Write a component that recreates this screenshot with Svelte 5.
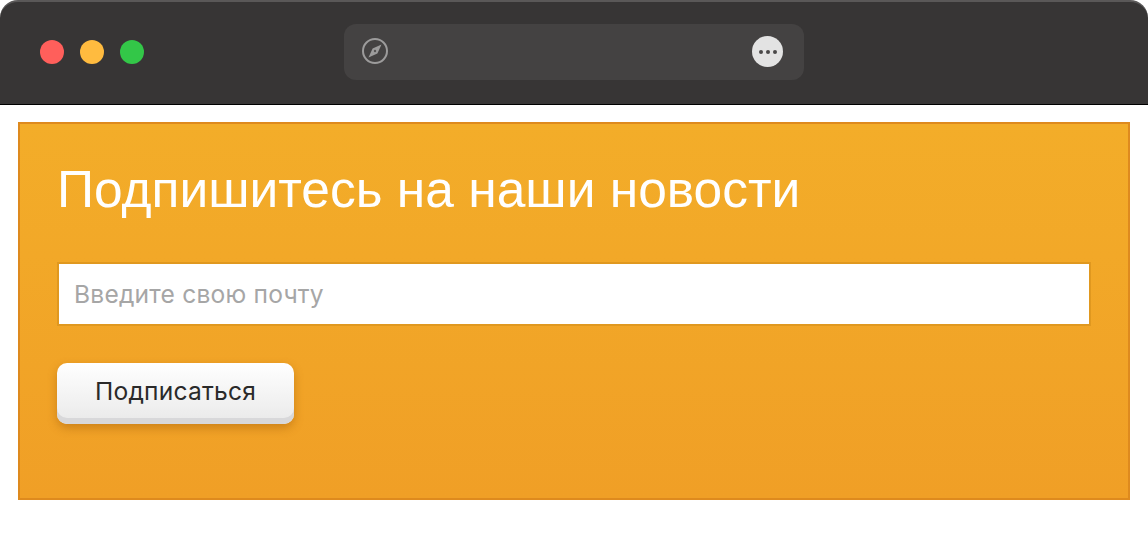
<script>
  const lights = ['#ff5f5b', '#ffbb3f', '#33c748'];
</script>

<div class="page">
  <header class="titlebar">
    <div class="lights">
      {#each lights as color}
        <span class="light" style:background={color}></span>
      {/each}
    </div>
    <div class="address">
      <svg class="compass" width="28" height="28" viewBox="0 0 28 28" aria-hidden="true">
        <circle cx="14" cy="14" r="12" fill="none" stroke="#9c9b9b" stroke-width="2" />
        <path d="M20.5 7.5 16.4 16.4 7.5 20.5 11.6 11.6Z" fill="#9c9b9b" />
        <circle cx="14" cy="14" r="1.2" fill="#555353" />
      </svg>
      <span class="more"><i></i><i></i><i></i></span>
    </div>
  </header>

  <section class="card">
    <h1>Подпишитесь на наши новости</h1>
    <input type="email" placeholder="Введите свою почту" />
    <button type="button">Подписаться</button>
  </section>
</div>

<style>
  :global(body) {
    margin: 0;
    background: #fff;
  }
  .page {
    width: 1148px;
    height: 548px;
    overflow: hidden;
    background: #fff;
  }
  .titlebar {
    box-sizing: border-box;
    height: 105px;
    display: flex;
    align-items: center;
    padding: 0 0 3px 40px;
    background: #373535;
    border-top: 2px solid #5a5858;
    border-bottom: 1px solid #000;
    border-radius: 18px 18px 0 0;
  }
  .lights {
    display: flex;
    gap: 16px;
    width: 304px;
    flex: none;
  }
  .light {
    width: 24px;
    height: 24px;
    border-radius: 50%;
  }
  .address {
    box-sizing: border-box;
    width: 460px;
    height: 56px;
    display: flex;
    align-items: center;
    justify-content: space-between;
    padding: 0 21px 2px 17px;
    background: #444242;
    border-radius: 12px;
  }
  .compass {
    display: block;
  }
  .more {
    width: 31px;
    height: 31px;
    border-radius: 50%;
    background: #e3e3e3;
    display: flex;
    align-items: center;
    justify-content: center;
    gap: 3px;
    margin-top: 2px;
  }
  .more i {
    width: 4px;
    height: 4px;
    border-radius: 50%;
    background: #4a4848;
  }
  .card {
    box-sizing: border-box;
    width: 1112px;
    height: 378px;
    margin: 17px 0 0 18px;
    padding: 35px 38px 0 37px;
    display: flex;
    flex-direction: column;
    align-items: flex-start;
    background: linear-gradient(#f3ad29, #f09f26);
    border: 2px solid #de8a1e;
  }
  h1 {
    margin: 0;
    height: 60px;
    color: #fff;
    font: 400 51.5px/60px "Liberation Sans", Arial, sans-serif;
  }
  input {
    box-sizing: border-box;
    width: 1034px;
    height: 64px;
    margin-top: 43px;
    padding: 0 15px;
    background: #fff;
    border: 2px solid #e0981f;
    border-radius: 0;
    outline: none;
    font: 400 24.6px Inter, "Liberation Sans", sans-serif;
    letter-spacing: 0.2px;
  }
  input::placeholder {
    color: #a6a6a6;
    opacity: 1;
  }
  button {
    box-sizing: border-box;
    width: 237px;
    height: 61px;
    margin-top: 37px;
    padding: 0 0 6px;
    color: #2a2a2a;
    background: linear-gradient(#fff, #e9e9e9);
    border: 0;
    border-radius: 10px;
    box-shadow: inset 0 -6px 0 #d8d8da, 0 4px 10px rgba(160, 90, 10, 0.45);
    font: 400 24.6px Inter, "Liberation Sans", sans-serif;
    letter-spacing: 0.2px;
  }
</style>
